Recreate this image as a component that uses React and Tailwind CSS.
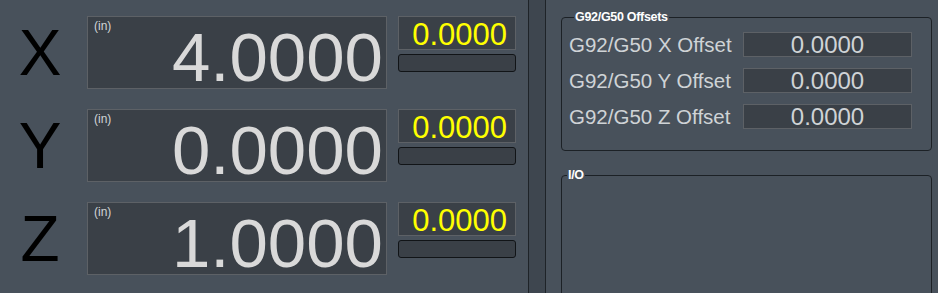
import React from "react";

const axes = [
  { name: "X", value: "4.0000", work: "0.0000" },
  { name: "Y", value: "0.0000", work: "0.0000" },
  { name: "Z", value: "1.0000", work: "0.0000" },
];

const offsets = ["X", "Y", "Z"];

const AxisRow = ({ name, value, work }) => (
  <div className="flex items-start h-[73px]">
    {/* Axis letter */}
    <div className="w-[80px] mr-[7px] h-[73px] flex items-center justify-center text-[64px] leading-[64px] text-black">
      {name}
    </div>

    {/* Main DRO readout */}
    <div className="w-[300px] h-[73px] box-border border border-[#5d6166] bg-[#3a4047] flex items-start">
      <span className="ml-[6px] mt-[2px] text-[12px] leading-[14px] text-[#d2d4d6]">(in)</span>
      <span className="ml-auto pr-[3px] pt-[9px] text-[69px] leading-[63px] text-[#d9d9d9]">
        {value}
      </span>
    </div>

    {/* Work offset + bar */}
    <div className="ml-[11px] w-[118px] flex flex-col gap-[4px]">
      <div className="h-[34px] box-border border border-[#5d6166] bg-[#3a4047] flex justify-end pr-[8px] pt-[2px] text-[31px] leading-[31px] text-[#ffff00]">
        {work}
      </div>
      <div className="h-[18px] box-border border border-[#111417] rounded-[3px] bg-[#3a4047]" />
    </div>
  </div>
);

export default function App() {
  return (
    <div
      className="w-[938px] h-[293px] overflow-hidden bg-[#48515b] flex"
      style={{ fontFamily: '"Liberation Sans", Arial, sans-serif' }}
    >
      {/* Left: DRO */}
      <div className="w-[528px] flex flex-col pt-[16px] gap-[20px]">
        {axes.map((a) => (
          <AxisRow key={a.name} {...a} />
        ))}
      </div>

      {/* Divider */}
      <div className="w-[18px] h-full box-border border-x border-[#1e2328] bg-[#3e464f]" />

      {/* Right panel */}
      <div className="flex-1 flex flex-col pt-[10px] pl-[15px] pr-[6px]">
        <fieldset className="shrink-0 h-[141px] box-border border border-[#1c2126] rounded-[4px] pl-[7px] pr-[19px] pt-[8px]">
          <legend className="ml-[5px] px-[1px] text-[12.5px] leading-[14px] font-bold text-white tracking-[-0.3px]">
            G92/G50 Offsets
          </legend>
          <div className="flex flex-col gap-[11px]">
            {offsets.map((o) => (
              <div key={o} className="flex items-center h-[25px]">
                <span className="text-[20.5px] leading-[20px] text-[#cfd3d6]">G92/G50 {o} Offset</span>
                <div className="ml-auto w-[169px] h-[25px] box-border border border-[#5d6166] bg-[#3a4047] flex items-center justify-center text-[24px] leading-[24px] text-[#cfd3d6]">
                  0.0000
                </div>
              </div>
            ))}
          </div>
        </fieldset>

        <fieldset className="shrink-0 mt-[17px] h-[200px] box-border border border-[#1c2126] rounded-[4px]">
          <legend className="ml-[5px] px-[1px] text-[12.5px] leading-[14px] font-bold text-white tracking-[-0.3px]">
            I/O
          </legend>
        </fieldset>
      </div>
    </div>
  );
}
